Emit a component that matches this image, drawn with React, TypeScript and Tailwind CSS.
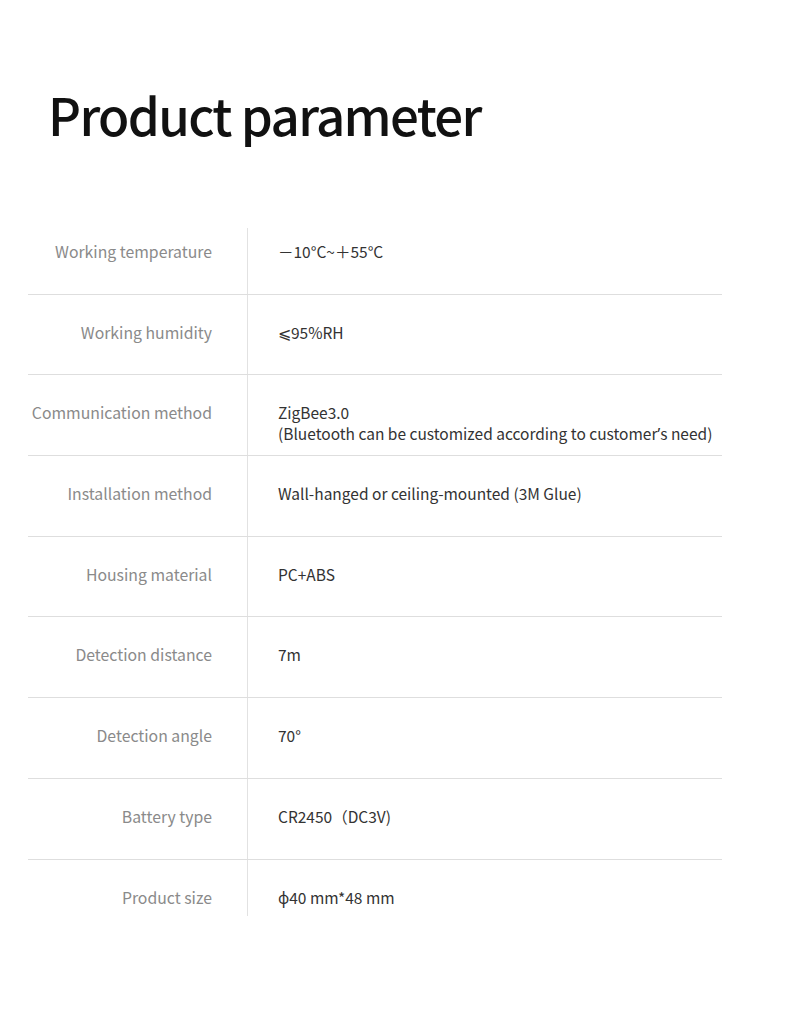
const params: { label: string; value: React.ReactNode[] }[] = [
  { label: 'Working temperature', value: ['－10°C~＋55°C'] },
  { label: 'Working humidity', value: ['⩽95%RH'] },
  {
    label: 'Communication method',
    value: [
      'ZigBee3.0',
      <>
        (Bluetooth can be customized according to customer
        <span style={{ fontFamily: '"Noto Sans", sans-serif' }}>’</span>s need)
      </>,
    ],
  },
  { label: 'Installation method', value: ['Wall-hanged or ceiling-mounted (3M Glue)'] },
  { label: 'Housing material', value: ['PC+ABS'] },
  { label: 'Detection distance', value: ['7m'] },
  { label: 'Detection angle', value: ['70°'] },
  { label: 'Battery type', value: ['CR2450（DC3V)'] },
  { label: 'Product size', value: ['ϕ40 mm*48 mm'] },
];

export default function App() {
  return (
    <div
      className="w-[790px] min-h-[1027px] bg-white"
      style={{ fontFamily: '"Noto Sans CJK SC", "Noto Sans", sans-serif' }}
    >
      <h1 className="pl-[48px] pt-[82px] text-[51px] leading-[64px] font-medium text-[#111] tracking-[-1.65px]">
        Product parameter
      </h1>

      <div className="mt-[68px] ml-[28px] w-[694px]">
        {params.map((p, i) => {
          const first = i === 0;
          const last = i === params.length - 1;
          return (
            <div
              key={p.label}
              className={
                last
                  ? 'flex h-[70px]'
                  : 'flex h-[80.7px] border-b border-[#dedede]'
              }
            >
              <div className="w-[219px] pr-[35px] pt-[27px] text-right text-[15.8px] leading-[21px] text-[#8a8a8a]">
                {p.label}
              </div>
              <div
                className={
                  first
                    ? 'w-px mt-[14px] bg-[#e2e2e2]'
                    : last
                    ? 'w-px mb-[14px] bg-[#e2e2e2]'
                    : 'w-px bg-[#e2e2e2]'
                }
              />
              <div className="flex-1 pl-[30px] pt-[27px] text-[15.5px] leading-[21px] text-[#333]">
                {p.value.map((v, j) => (
                  <div key={j}>{v}</div>
                ))}
              </div>
            </div>
          );
        })}
      </div>
    </div>
  );
}
